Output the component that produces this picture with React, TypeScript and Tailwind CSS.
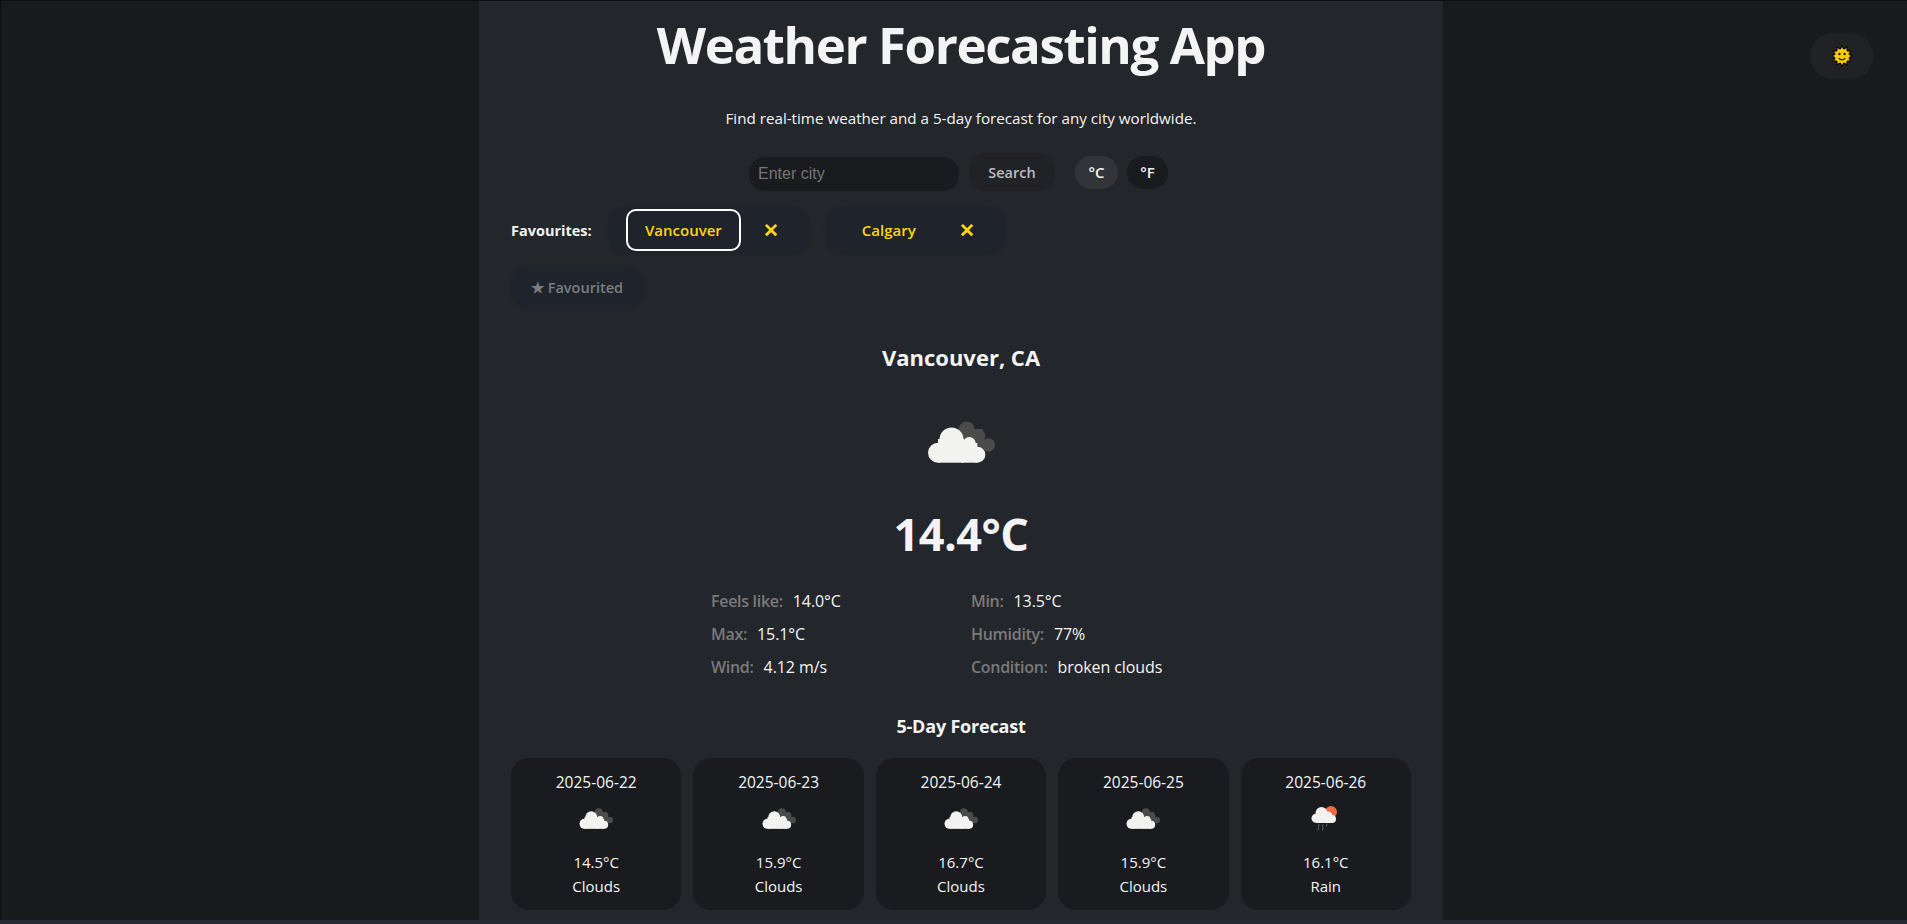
const font = { fontFamily: '"Open Sans", "Noto Sans", sans-serif' };

function CloudIcon({ size }: { size: number }) {
  return (
    <svg width={size} height={size} viewBox="0 0 100 100" className="block">
      <g fill="#4b4b4b">
        <circle cx="55.700" cy="36.500" r="8" />
        <circle cx="68" cy="43" r="6.500" />
        <circle cx="77.300" cy="52" r="6.700" />
        <rect x="52" y="36" width="20" height="20" />
      </g>
      <g fill="#f2f2f0">
        <circle cx="27" cy="59.700" r="10" />
        <circle cx="40.500" cy="46.500" r="12" />
        <circle cx="58.300" cy="50.500" r="6.500" />
        <circle cx="66.300" cy="61.700" r="8" />
        <rect x="27" y="46" width="26" height="23.700" />
        <rect x="50" y="50" width="16.300" height="19.700" />
      </g>
    </svg>
  );
}

function RainIcon({ size }: { size: number }) {
  return (
    <svg width={size} height={size} viewBox="0 0 100 100" className="block">
      <circle cx="60" cy="36" r="12" fill="#ef6a45" />
      <g fill="#f2f2f0">
        <circle cx="30" cy="48.500" r="9" />
        <circle cx="41" cy="38" r="12" />
        <circle cx="54" cy="42" r="7" />
        <circle cx="62" cy="50" r="8" />
        <rect x="30" y="38" width="32" height="20" />
      </g>
      <g stroke="#666" strokeWidth="2" strokeLinecap="round">
        <path d="M36 61l-1 4" />
        <path d="M44 61l-1 4" />
        <path d="M52 60l-1 4" />
        <path d="M35 68l-1 4" />
        <path d="M44 68l-1 4" />
      </g>
    </svg>
  );
}

function SunIcon() {
  const rays = Array.from({ length: 12 }, (_, i) => i * 30);
  return (
    <svg width="22" height="22" viewBox="0 0 22 22" className="block">
      {rays.map((r) => (
        <path key={r} d="M11 0L14 5.500H8Z" fill="#000" transform={`rotate(${r} 11 11)`} />
      ))}
      <circle cx="11" cy="11" r="8.500" fill="#000" />
      {rays.map((r) => (
        <path key={r} d="M11 1.800L13 6H9Z" fill="#ffcc00" transform={`rotate(${r} 11 11)`} />
      ))}
      <circle cx="11" cy="11" r="7" fill="#ffcc00" />
      <circle cx="8.400" cy="9" r="1.300" fill="#222" />
      <circle cx="13.600" cy="9" r="1.300" fill="#222" />
      <path d="M7.600 13.200Q11 16.400 14.400 13.200" stroke="#222" strokeWidth="1.200" fill="none" />
    </svg>
  );
}

function Fav({ name, active, gap }: { name: string; active?: boolean; gap: string }) {
  return (
    <div className="flex h-[46px] items-center rounded-2xl bg-[#1f232b] pl-[17px] pr-[32px] shadow-[0_1px_4px_rgba(0,0,0,0.08)]">
      <button
        className={`flex h-[42px] items-center justify-center rounded-[10px] border-2 px-[17px] pt-[1px] text-[15px] font-semibold text-[#ffd60a] ${
          active ? "border-white" : "border-transparent"
        }`}
      >
        {name}
      </button>
      <span className={`flex w-[12px] justify-center pt-[1px] text-[19px] font-semibold leading-none text-[#ffd60a] ${gap}`}>
        ✕
      </span>
    </div>
  );
}

function Stat({ label, value }: { label: string; value: string }) {
  return (
    <div className="h-[33px] text-[16px] leading-[33px]">
      <span className="font-semibold tracking-[-0.3px] text-[#7a7a7a]">{label}:</span>
      <span className="ml-[10px] tracking-[-0.1px] text-[#f4f4f4]">{value}</span>
    </div>
  );
}

function Day({ date, temp, cond, rain }: { date: string; temp: string; cond: string; rain?: boolean }) {
  return (
    <div className="flex h-[152px] flex-col items-center rounded-[18px] bg-[#191b1f] pt-[12px] text-[15px] text-[#f4f4f4]">
      <div className="h-[24px] text-[15.500px] leading-[24px]">{date}</div>
      <div className="h-[50px]">{rain ? <RainIcon size={50} /> : <CloudIcon size={50} />}</div>
      <div className="mt-[6px] h-[24px] leading-[24px]">{temp}</div>
      <div className="h-[24px] leading-[24px]">{cond}</div>
    </div>
  );
}

export default function App() {
  const days = [
    { date: "2025-06-22", temp: "14.5°C", cond: "Clouds" },
    { date: "2025-06-23", temp: "15.9°C", cond: "Clouds" },
    { date: "2025-06-24", temp: "16.7°C", cond: "Clouds" },
    { date: "2025-06-25", temp: "15.9°C", cond: "Clouds" },
    { date: "2025-06-26", temp: "16.1°C", cond: "Rain", rain: true },
  ];
  return (
    <div className="relative h-[924px] overflow-hidden bg-[#252a35]" style={font}>
      <div className="flex h-[920px] border-l border-t border-[#0e0f10] bg-[#181a1b]">
        <main className="ml-[478px] w-[964px] bg-[#23262b] px-[32px] text-[#f4f4f4]">
          <h1 className="mt-[9px] h-[68px] text-center text-[51px] font-bold leading-[68px] tracking-[-1.4px] text-[#f4f4f4]">
            Weather Forecasting App
          </h1>
          <p className="mt-[28px] h-[24px] text-center text-[15.200px] leading-[24px]">
            Find real-time weather and a 5-day forecast for any city worldwide.
          </p>
          <div className="ml-[238px] mt-[23px] flex h-[38px] items-start">
            <input
              placeholder="Enter city"
              className="mt-[4px] h-[34px] w-[210px] rounded-2xl bg-[#191b1f] px-[9px] text-[16px] outline-none placeholder:text-[#757575]"
              style={{ fontFamily: '"Liberation Sans", sans-serif' }}
            />
            <button className="ml-[10px] h-[38px] w-[86px] rounded-2xl bg-[#212225] pt-[2px] text-[14.500px] font-semibold text-[#bdbdbd]">
              Search
            </button>
            <button className="ml-[20px] mt-[3px] h-[33px] w-[43px] rounded-2xl bg-[#333438] text-[15px] font-semibold text-[#f4f4f4]">
              °C
            </button>
            <button className="ml-[9px] mt-[3px] h-[33px] w-[41px] rounded-2xl bg-[#191b1f] text-[15px] font-semibold text-[#f4f4f4]">
              °F
            </button>
          </div>
          <div className="mt-[16px] flex h-[46px] items-center">
            <span className="w-[98px] pt-[1px] text-[14.500px] font-bold text-[#f4f4f4]">Favourites:</span>
            <Fav name="Vancouver" active gap="ml-[24px]" />
            <div className="w-[17px]" />
            <Fav name="Calgary" gap="ml-[26px]" />
          </div>
          <div className="mt-[15px] flex h-[38px] w-[132px] items-center justify-center rounded-2xl bg-[#1f232b] pt-[2px] text-[14.500px] font-semibold text-[#7a7d82] shadow-[0_1px_4px_rgba(0,0,0,0.08)]">
            ★ Favourited
          </div>
          <h2 className="mt-[35px] h-[32px] text-center text-[22px] font-bold leading-[32px]">
            Vancouver, CA
          </h2>
          <div className="mt-[20px] flex h-[100px] justify-center">
            <CloudIcon size={100} />
          </div>
          <div className="mt-[10px] h-[62px] text-center text-[45px] font-bold leading-[62px] tracking-[-0.5px]">
            14.4°C
          </div>
          <div className="ml-[200px] mt-[20px] grid w-[520px] grid-cols-[260px_260px]">
            <Stat label="Feels like" value="14.0°C" />
            <Stat label="Min" value="13.5°C" />
            <Stat label="Max" value="15.1°C" />
            <Stat label="Humidity" value="77%" />
            <Stat label="Wind" value="4.12 m/s" />
            <Stat label="Condition" value="broken clouds" />
          </div>
          <h3 className="mt-[28px] h-[28px] text-center text-[18px] font-bold leading-[28px] tracking-[-0.2px]">
            5-Day Forecast
          </h3>
          <div className="mt-[18px] grid grid-cols-5 gap-[12px]">
            {days.map((d) => (
              <Day key={d.date} {...d} />
            ))}
          </div>
        </main>
      </div>
      <button className="absolute right-[34px] top-[33px] flex h-[46px] w-[63px] items-center justify-center rounded-full bg-[#212225]">
        <SunIcon />
      </button>
    </div>
  );
}
